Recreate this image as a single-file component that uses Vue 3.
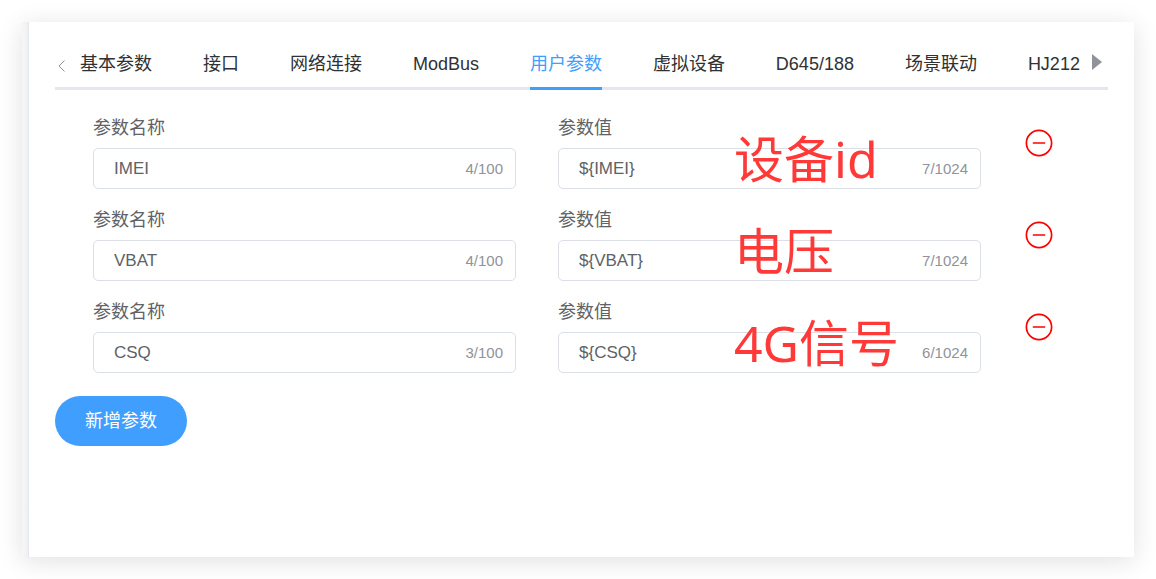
<script setup>
import { ref } from 'vue'

const tabs = ['基本参数', '接口', '网络连接', 'ModBus', '用户参数', '虚拟设备', 'D645/188', '场景联动', 'HJ212']
const active = ref('用户参数')

const rows = ref([
  { name: 'IMEI', value: '${IMEI}', note: '设备id' },
  { name: 'VBAT', value: '${VBAT}', note: '电压' },
  { name: 'CSQ', value: '${CSQ}', note: '4G信号' },
])

const addRow = () => rows.value.push({ name: '', value: '', note: '' })
const removeRow = (index) => rows.value.splice(index, 1)
</script>

<template>
  <main class="page">
    <section class="panel">
      <div class="content">
        <nav class="tabs">
          <button class="arrow" type="button" aria-label="向左">
            <svg width="8" height="14" viewBox="0 0 8 14" fill="none" stroke="#909399">
              <path d="M6.500 1.500 1 7l5.500 5.500" />
            </svg>
          </button>
          <div class="tab-list">
            <button
              v-for="tab in tabs"
              :key="tab"
              type="button"
              class="tab"
              :class="{ active: tab === active }"
              @click="active = tab"
            >{{ tab }}</button>
          </div>
          <button class="arrow next" type="button" aria-label="向右">
            <svg width="10" height="16" viewBox="0 0 10 16" fill="#909399">
              <path d="M0 0 10 8 0 16Z" />
            </svg>
          </button>
        </nav>

        <form class="form" @submit.prevent>
          <div v-for="(row, i) in rows" :key="i" class="row">
            <div class="field">
              <label :for="'name-' + i">参数名称</label>
              <div class="box">
                <input :id="'name-' + i" v-model="row.name" type="text" maxlength="100" />
                <span class="count">{{ row.name.length }}/100</span>
              </div>
            </div>
            <div class="field">
              <label :for="'value-' + i">参数值</label>
              <div class="box">
                <input :id="'value-' + i" v-model="row.value" type="text" maxlength="1024" />
                <span class="count">{{ row.value.length }}/1024</span>
              </div>
              <span class="note">{{ row.note }}</span>
            </div>
            <button class="remove" type="button" aria-label="删除" @click="removeRow(i)">
              <svg width="28" height="28" viewBox="0 0 28 28" fill="none" stroke="#f00" stroke-width="1.700">
                <circle cx="14" cy="14" r="12.600" />
                <path d="M8.500 14h11" stroke-linecap="round" />
              </svg>
            </button>
          </div>
          <button class="add" type="button" @click="addRow">新增参数</button>
        </form>
      </div>
    </section>
  </main>
</template>

<style>
body {
  margin: 0;
  background: #fff;
}
</style>

<style scoped>
.page {
  box-sizing: border-box;
  display: flex;
  min-height: 100vh;
  padding: 22px;
  overflow: hidden;
  font-family: "Liberation Sans", "Noto Sans CJK SC", sans-serif;
  color: #606266;
}
.panel {
  flex: 1;
  display: flex;
  box-sizing: border-box;
  padding-left: 6px;
  background: linear-gradient(to right, #f7f7f7, #efefef 6px);
  box-shadow: 0 4px 24px rgba(0, 0, 0, 0.12);
}
.content {
  flex: 1;
  min-width: 0;
  border-left: 1px solid #e4e7ed;
  background: #fff;
  padding: 20px 26px;
}
button {
  padding: 0;
  border: 0;
  background: none;
  font: inherit;
  color: inherit;
  cursor: pointer;
}
.tabs {
  display: flex;
  align-items: stretch;
  height: 45px;
  border-bottom: 3px solid #e4e7ed;
}
.arrow {
  flex: none;
  width: 25px;
  display: flex;
  align-items: center;
  padding: 2px 0 0 3px;
}
.arrow.next {
  width: 16px;
  padding: 0 0 6px;
}
.tab-list {
  flex: 1;
  display: flex;
  justify-content: space-between;
  padding-right: 12px;
}
.tab {
  margin-bottom: -3px;
  padding-bottom: 1px;
  border-bottom: 3px solid transparent;
  font-size: 18px;
  line-height: 24px;
  white-space: nowrap;
  color: #303133;
}
.tab.active {
  color: #409eff;
  border-color: #409eff;
}
.row {
  display: grid;
  grid-template-columns: 1fr 1fr 32px;
  column-gap: 42px;
  height: 92px;
  padding: 0 53px 0 38px;
}
.form {
  padding-top: 24px;
}
.field {
  position: relative;
}
label {
  display: block;
  height: 34px;
  font-size: 18px;
  line-height: 28px;
}
.box {
  display: flex;
  align-items: center;
  box-sizing: border-box;
  height: 41px;
  padding: 0 12px 0 20px;
  border: 1px solid #dcdfe6;
  border-radius: 5px;
}
input {
  flex: 1;
  min-width: 0;
  padding: 0;
  border: 0;
  outline: 0;
  background: none;
  font: inherit;
  font-size: 17px;
  color: #606266;
}
.count {
  font-size: 15px;
  color: #909399;
}
.note {
  position: absolute;
  left: 176px;
  top: 10px;
  font-family: "Noto Sans", "Noto Sans CJK SC", sans-serif;
  font-size: 50px;
  line-height: 70px;
  white-space: nowrap;
  color: #ff3838;
  pointer-events: none;
}
.remove {
  align-self: start;
  display: flex;
  justify-content: center;
  padding-top: 15px;
}
.add {
  height: 50px;
  margin-top: 6px;
  padding: 0 30px 4px;
  border-radius: 25px;
  background: #409eff;
  color: #fff;
  font-size: 18px;
}
</style>
